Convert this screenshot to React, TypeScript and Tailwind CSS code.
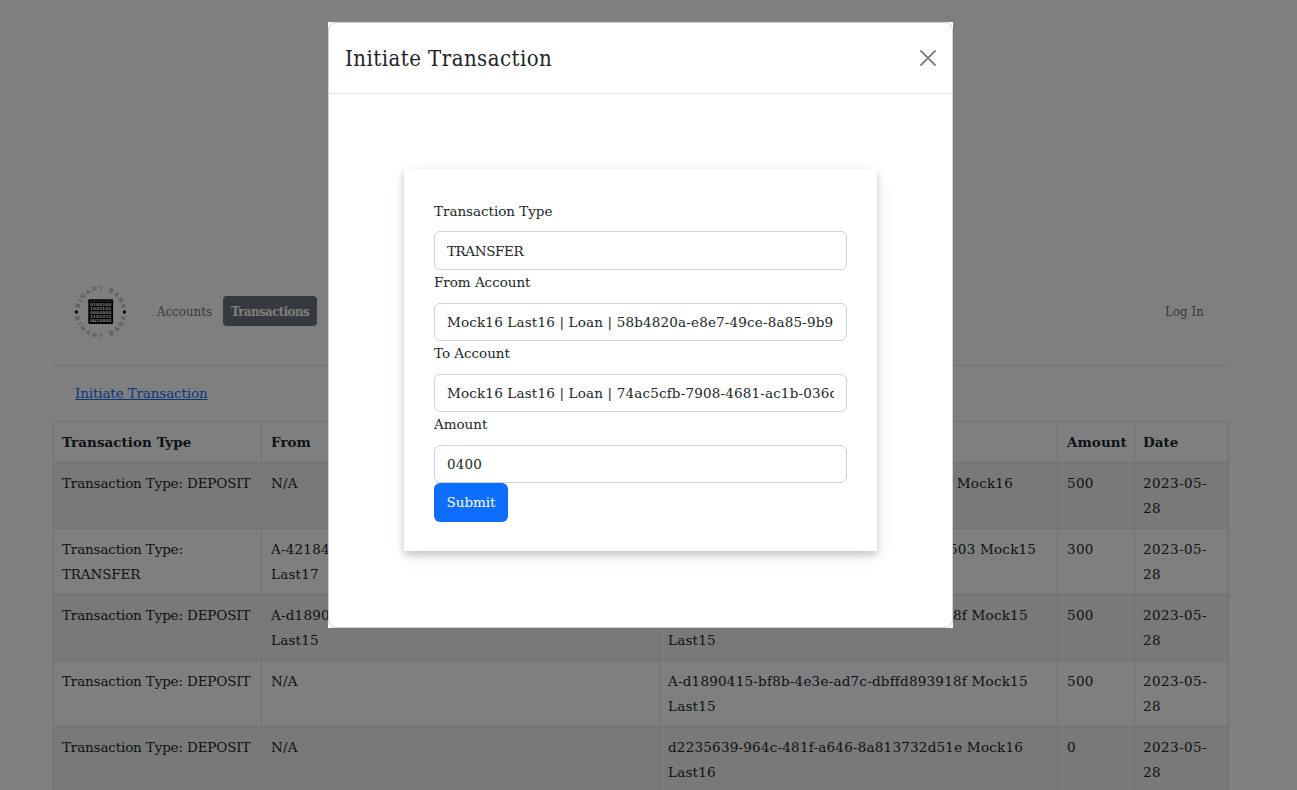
import React from "react";

const rows = [
  { type: "Transaction Type: DEPOSIT", from: "N/A", to: "d1890415-bf8b-4e3e-ad7c-dbffd893918f Mock16 Last16", amount: "500" },
  { type: "Transaction Type: TRANSFER", from: "A-42184c1e-7b0d-4f6a-9c35-1be2a8d0e503 Mock17 Last17", to: "A-42184c1e-7b0d-4f6a-9c35-1be2a8d0e503 Mock15 Last15", amount: "300" },
  { type: "Transaction Type: DEPOSIT", from: "A-d1890415-bf8b-4e3e-ad7c-dbffd893918f Mock15 Last15", to: "A-d1890415-bf8b-4e3e-ad7c-dbffd893918f Mock15 Last15", amount: "500" },
  { type: "Transaction Type: DEPOSIT", from: "N/A", to: "A-d1890415-bf8b-4e3e-ad7c-dbffd893918f Mock15 Last15", amount: "500" },
  { type: "Transaction Type: DEPOSIT", from: "N/A", to: "d2235639-964c-481f-a646-8a813732d51e Mock16 Last16", amount: "0" },
];

const cell = "border border-[#dee2e6] pt-2 pb-[7px] pr-1";

const bits = ["0100100", "1001101", "0000000", "1101011", "0010000"];

function Logo() {
  return (
    <svg className="h-[60px] w-[60px] shrink-0" viewBox="0 0 60 60">
      <defs>
        <path id="arc-top" d="M8.9 31a21.5 21.5 0 0 1 43 0" />
        <path id="arc-bottom" d="M4.4 31a26 26 0 0 0 52 0" />
      </defs>
      <g fill="#8c8c8c" fontFamily="Liberation Sans, sans-serif" fontSize="6.4" letterSpacing="0">
        <text><textPath href="#arc-top" startOffset="4" textLength="60" lengthAdjust="spacing">BINARY BANK</textPath></text>
        <text><textPath href="#arc-bottom" startOffset="5" textLength="72" lengthAdjust="spacing">BINARY BANK</textPath></text>
      </g>
      <circle cx="6.3" cy="31" r="1.7" />
      <circle cx="54.5" cy="31" r="1.7" />
      <rect x="18.3" y="18.2" width="24.8" height="24.8" rx="1" />
      <path d="M19.5 20h22" stroke="#777" strokeWidth=".8" />
      <g fill="#fff" fontFamily="Liberation Sans, sans-serif" fontWeight="700" fontSize="3.4" letterSpacing="0">
        {bits.map((b, i) => (
          <text key={i} x="20" y={25.4 + i * 3.98} textLength="21.4" lengthAdjust="spacingAndGlyphs">{b}</text>
        ))}
      </g>
    </svg>
  );
}

function Field({ label, value, first = false }: { label: string; value: string; first?: boolean }) {
  return (
    <div className="flex flex-col">
      <label className={first ? "mb-2 h-6 leading-[25px]" : "mb-2 h-[25px] leading-[25px]"}>{label}</label>
      <input
        readOnly
        value={value}
        className={`${first ? "h-[39px] tracking-[-0.4px]" : "h-[38px] tracking-[0.17px]"} w-full rounded-md border border-[#ced4da] bg-white px-3 text-[13.5px] outline-none`}
      />
    </div>
  );
}

export default function App() {
  return (
    <div className="relative h-[790px] w-full overflow-hidden bg-white font-['DejaVu_Serif',serif] text-[13.5px] leading-[25px] tracking-[-0.03px] text-[#212529]">
      <main className="ml-[53px] w-[1176px] pt-[257px]">
        <nav className="ml-px flex h-[109px] items-center border-b border-[#dee2e6] pl-4 font-['DejaVu_Serif_Condensed',serif] text-[13px] tracking-[0.1px] text-[#6c757d]">
          <Logo />
          <div className="ml-[18px] flex gap-0.5">
            <button className="h-[30px] w-[73px] rounded border border-[#f8f9fa]">Accounts</button>
            <button className="h-[30px] w-[94px] rounded bg-[#6c757d] font-bold tracking-[-0.5px] text-white">Transactions</button>
            <button className="h-[30px] w-[73px] rounded border border-[#f8f9fa]" />
          </div>
          <button className="mr-4 ml-auto h-[30px] w-[57px] rounded border border-[#f8f9fa]">Log In</button>
        </nav>
        <div className="flex h-[55px] items-center pl-[22px]">
          <a className="tracking-[-0.13px] text-[#0d6efd] underline">Initiate Transaction</a>
        </div>
        <table className="w-[1176px] table-fixed border-collapse text-left">
          <colgroup>
            <col className="w-[208px]" />
            <col className="w-[398px]" />
            <col className="w-[398px]" />
            <col className="w-[77px]" />
            <col className="w-[94px]" />
          </colgroup>
          <thead>
            <tr className="h-[41px]">
              {["Transaction Type", "From", "To", "Amount", "Date"].map((h) => (
                <th key={h} className="border border-[#dee2e6] py-[7px] pr-0 pl-2 font-bold tracking-[0.04px] whitespace-nowrap even:pl-[9px]">{h}</th>
              ))}
            </tr>
          </thead>
          <tbody>
            {rows.map((r, i) => (
              <tr key={i} className="h-[66px] align-top odd:bg-[#f2f2f2]">
                <td className={`${cell} pl-2 tracking-[-0.15px]`}>{r.type}</td>
                <td className={`${cell} pl-[9px] tracking-[0.22px]`}>{r.from}</td>
                <td className={`${cell} pl-2 tracking-[0.22px]`}>{r.to}</td>
                <td className={`${cell} pl-[9px] tracking-[0.3px]`}>{r.amount}</td>
                <td className={`${cell} pl-2 tracking-[0.4px]`}>2023-05-<br />28</td>
              </tr>
            ))}
          </tbody>
        </table>
      </main>

      <div className="absolute inset-0 bg-black/50">
        <div className="mt-[22px] ml-[328px] h-[606px] w-[625px] bg-white">
          <div className="h-full rounded-lg border border-black/[0.175]">
            <header className="flex h-[71px] items-center justify-between border-b border-[#dee2e6] pr-4 pl-4">
              <h1 className="font-['DejaVu_Serif_Condensed',serif] text-[22px] tracking-[0.46px]">Initiate Transaction</h1>
              <svg className="h-4 w-4" viewBox="0 0 16 16" fill="none" stroke="#808080" strokeWidth="1.8" strokeLinecap="round">
                <path d="M1 1l14 14M15 1L1 15" />
              </svg>
            </header>
            <div className="px-[75px] pt-[75px]">
              <form className="h-[382px] w-[473px] bg-white p-[30px] shadow-[0_4px_8px_0_rgba(0,0,0,0.2),0_6px_20px_0_rgba(0,0,0,0.05)]">
                <Field label="Transaction Type" value="TRANSFER" first />
                <Field label="From Account" value="Mock16 Last16 | Loan | 58b4820a-e8e7-49ce-8a85-9b9" />
                <Field label="To Account" value="Mock16 Last16 | Loan | 74ac5cfb-7908-4681-ac1b-036d" />
                <Field label="Amount" value="0400" />
                <button type="button" className="block h-[39px] w-[74px] rounded-md bg-[#0d6efd] text-white">Submit</button>
              </form>
            </div>
          </div>
        </div>
      </div>
    </div>
  );
}
